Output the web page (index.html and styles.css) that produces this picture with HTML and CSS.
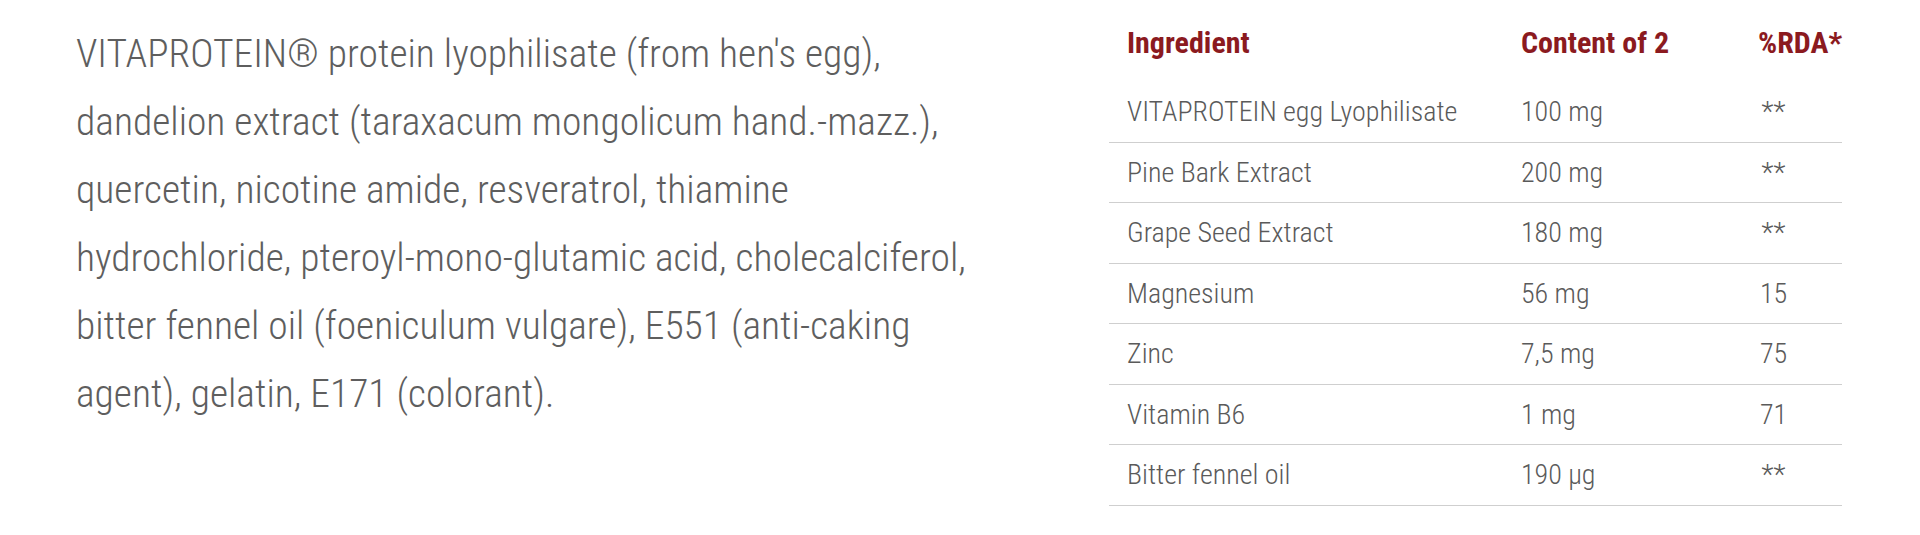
FILE: index.html
```html
<!DOCTYPE html>
<html>
<head>
<meta charset="utf-8">
<link rel="stylesheet" href="styles.css">
</head>
<body>
<div class="wrap">
  <p class="ingredients">VITAPROTEIN® protein lyophilisate (from hen's egg), dandelion extract (taraxacum mongolicum hand.-mazz.), quercetin, nicotine amide, resveratrol, thiamine hydrochloride, pteroyl-mono-glutamic acid, cholecalciferol, bitter fennel oil (foeniculum vulgare), E551 (anti-caking agent), gelatin, E171 (colorant).</p>
  <div class="table">
    <div class="row head">
      <div class="c1">Ingredient</div><div class="c2">Content of 2</div><div class="c3">%RDA*</div>
    </div>
    <div class="row"><div class="c1">VITAPROTEIN egg Lyophilisate</div><div class="c2">100 mg</div><div class="c3">**</div></div>
    <div class="row"><div class="c1">Pine Bark Extract</div><div class="c2">200 mg</div><div class="c3">**</div></div>
    <div class="row"><div class="c1">Grape Seed Extract</div><div class="c2">180 mg</div><div class="c3">**</div></div>
    <div class="row"><div class="c1">Magnesium</div><div class="c2">56 mg</div><div class="c3">15</div></div>
    <div class="row"><div class="c1">Zinc</div><div class="c2">7,5 mg</div><div class="c3">75</div></div>
    <div class="row"><div class="c1">Vitamin B6</div><div class="c2">1 mg</div><div class="c3">71</div></div>
    <div class="row"><div class="c1">Bitter fennel oil</div><div class="c2">190 µg</div><div class="c3">**</div></div>
  </div>
</div>
</body>
</html>
```
FILE: styles.css
```css
body {
  margin: 0;
  background: #fff;
  font-family: "Roboto", sans-serif;
  font-stretch: 75%;
}
.wrap {
  display: flex;
  justify-content: space-between;
  align-items: flex-start;
  padding: 0 78px 0 76px;
}
.ingredients {
  width: 920px;
  margin: 20px 0 0;
  font-size: 39.5px;
  font-weight: 300;
  line-height: 68px;
  color: #5e5e5e;
}
.table {
  width: 733px;
}
.row {
  display: grid;
  grid-template-columns: 394px 202px 137px;
  height: 60.5px;
  box-sizing: border-box;
  align-items: center;
  border-bottom: 1px solid #cfcfcf;
  font-size: 28px;
  font-weight: 300;
  color: #5a5a5a;
}
.row .c1, .row .c2 { padding-left: 18px; }
.row .c3 { text-align: center; }
.row.head {
  border-bottom: none;
  height: 82px;
  align-items: start;
  padding-top: 25px;
  font-size: 30px;
  line-height: 36px;
  font-weight: 700;
  color: #8b1a1f;
}
.row.head .c3 { text-align: right; }
```
